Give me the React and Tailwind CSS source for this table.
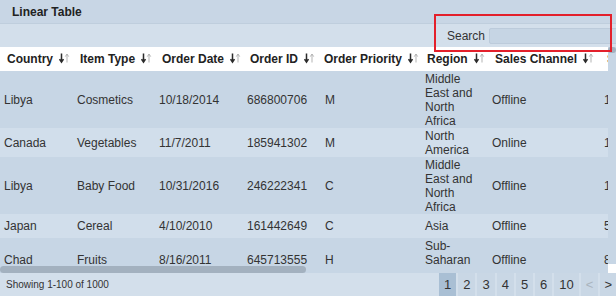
import React from 'react';

const columns = [
    { label: 'Country', w: 73 },
    { label: 'Item Type', w: 82 },
    { label: 'Order Date', w: 88 },
    { label: 'Order ID', w: 78 },
    { label: 'Order Priority', w: 100 },
    { label: 'Region', w: 67 },
    { label: 'Sales Channel', w: 112 },
    { label: 'Ship Date', w: 90 },
];

const rows = [
    ['Libya', 'Cosmetics', '10/18/2014', '686800706', 'M', 'Middle East and North Africa', 'Offline', '10/31/2014'],
    ['Canada', 'Vegetables', '11/7/2011', '185941302', 'M', 'North America', 'Online', '12/8/2011'],
    ['Libya', 'Baby Food', '10/31/2016', '246222341', 'C', 'Middle East and North Africa', 'Offline', '12/9/2016'],
    ['Japan', 'Cereal', '4/10/2010', '161442649', 'C', 'Asia', 'Offline', '5/12/2010'],
    ['Chad', 'Fruits', '8/16/2011', '645713555', 'H', 'Sub-Saharan Africa', 'Offline', '8/31/2011'],
];

const pages = ['1', '2', '3', '4', '5', '6', '10'];

function SortIcon() {
    return (
        <svg width="11" height="12" viewBox="0 0 11 12" className="inline-block align-[-1px] ml-[6px]">
            <path d="M2.5 1.5V10M0.5 7.2L2.5 10.2L4.5 7.2" fill="none" stroke="#2b2b2b" strokeWidth="1.5" />
            <path d="M8 10.5V2M6.3 4.6L8 2L9.7 4.6" fill="none" stroke="#b3b3b3" strokeWidth="1" />
        </svg>
    );
}

export default function App() {
    return (
        <div className="relative w-[616px] h-[296px] overflow-hidden font-['Liberation_Sans',Arial,sans-serif] text-[#333]">
            {/* Title */}
            <div className="h-[24px] bg-[#c8d6e5] border-b border-[#bfcedd] px-3 flex items-center text-[12px] font-bold text-[#222]">
                Linear Table
            </div>

            {/* Toolbar */}
            <div className="h-[23px] bg-[#d3dfeb] flex items-center justify-end overflow-hidden">
                <span className="text-[12px] text-[#333] mr-[4px]">Search</span>
                <input
                    type="text"
                    className="shrink-0 w-[137px] h-[16px] -mr-[10px] bg-[#c6d5e4] border border-[#bccbdb] rounded-[2px] outline-none"
                />
            </div>

            {/* Table viewport */}
            <div className="flex h-[217px]">
                <div className="w-[608px] overflow-hidden">
                    <table className="table-fixed border-collapse w-[690px] text-[12px]">
                        <colgroup>
                            {columns.map((c) => (
                                <col key={c.label} style={{ width: c.w }} />
                            ))}
                        </colgroup>
                        <thead>
                            <tr className="h-[24px] bg-white">
                                {columns.map((c, i) => (
                                    <th
                                        key={c.label}
                                        className={`${i === 4 ? 'pl-[3px]' : i === 5 ? 'pl-[6px]' : 'pl-[7px]'} pr-[3px] text-left font-bold text-[#222] whitespace-nowrap`}
                                    >
                                        {c.label}
                                        <SortIcon />
                                    </th>
                                ))}
                            </tr>
                        </thead>
                        <tbody>
                            {rows.map((r, i) => (
                                <tr key={i} className={i % 2 === 0 ? 'bg-[#c7d6e5]' : 'bg-[#d1deeb]'}>
                                    {r.map((cell, j) => (
                                        <td key={j} className="h-[24px] px-[4px] py-[0.5px] leading-[14px] align-middle">
                                            {cell}
                                        </td>
                                    ))}
                                </tr>
                            ))}
                        </tbody>
                    </table>
                </div>
                <div className="w-[8px] bg-[#c7d6e5]">
                    <div className="h-[6px] rounded-full bg-[#a3b1bf]" />
                </div>
            </div>

            {/* Horizontal scrollbar */}
            <div className="flex h-[9px]">
                <div className="w-[608px] bg-[#c7d6e5] pt-[2px]">
                    <div className="w-[306px] h-[7px] rounded-full bg-[#a3b1bf]" />
                </div>
                <div className="w-[8px] bg-white" />
            </div>

            {/* Footer */}
            <div className="h-[23px] bg-[#d3dfeb] flex items-stretch justify-between pl-[6px]">
                <span className="self-center text-[10px] text-[#333]">Showing 1-100 of 1000</span>
                <div className="flex gap-[2px] text-[13px]">
                    {pages.map((p) => (
                        <span
                            key={p}
                            className={`flex items-center px-[5px] ${p === '1' ? 'bg-[#a9bfd4]' : 'bg-[#c9d7e5]'} text-[#333]`}
                        >
                            {p}
                        </span>
                    ))}
                    <span className="flex items-center px-[5px] bg-[#c9d7e5] text-[#aab4be]">&lt;</span>
                    <span className="flex items-center px-[4px] bg-[#c9d7e5] text-[#333]">&gt;</span>
                </div>
            </div>

            {/* Highlight annotation */}
            <div className="absolute left-[434px] top-[14px] w-[178px] h-[38px] border-2 border-[#e3202b] pointer-events-none" />
        </div>
    );
}
